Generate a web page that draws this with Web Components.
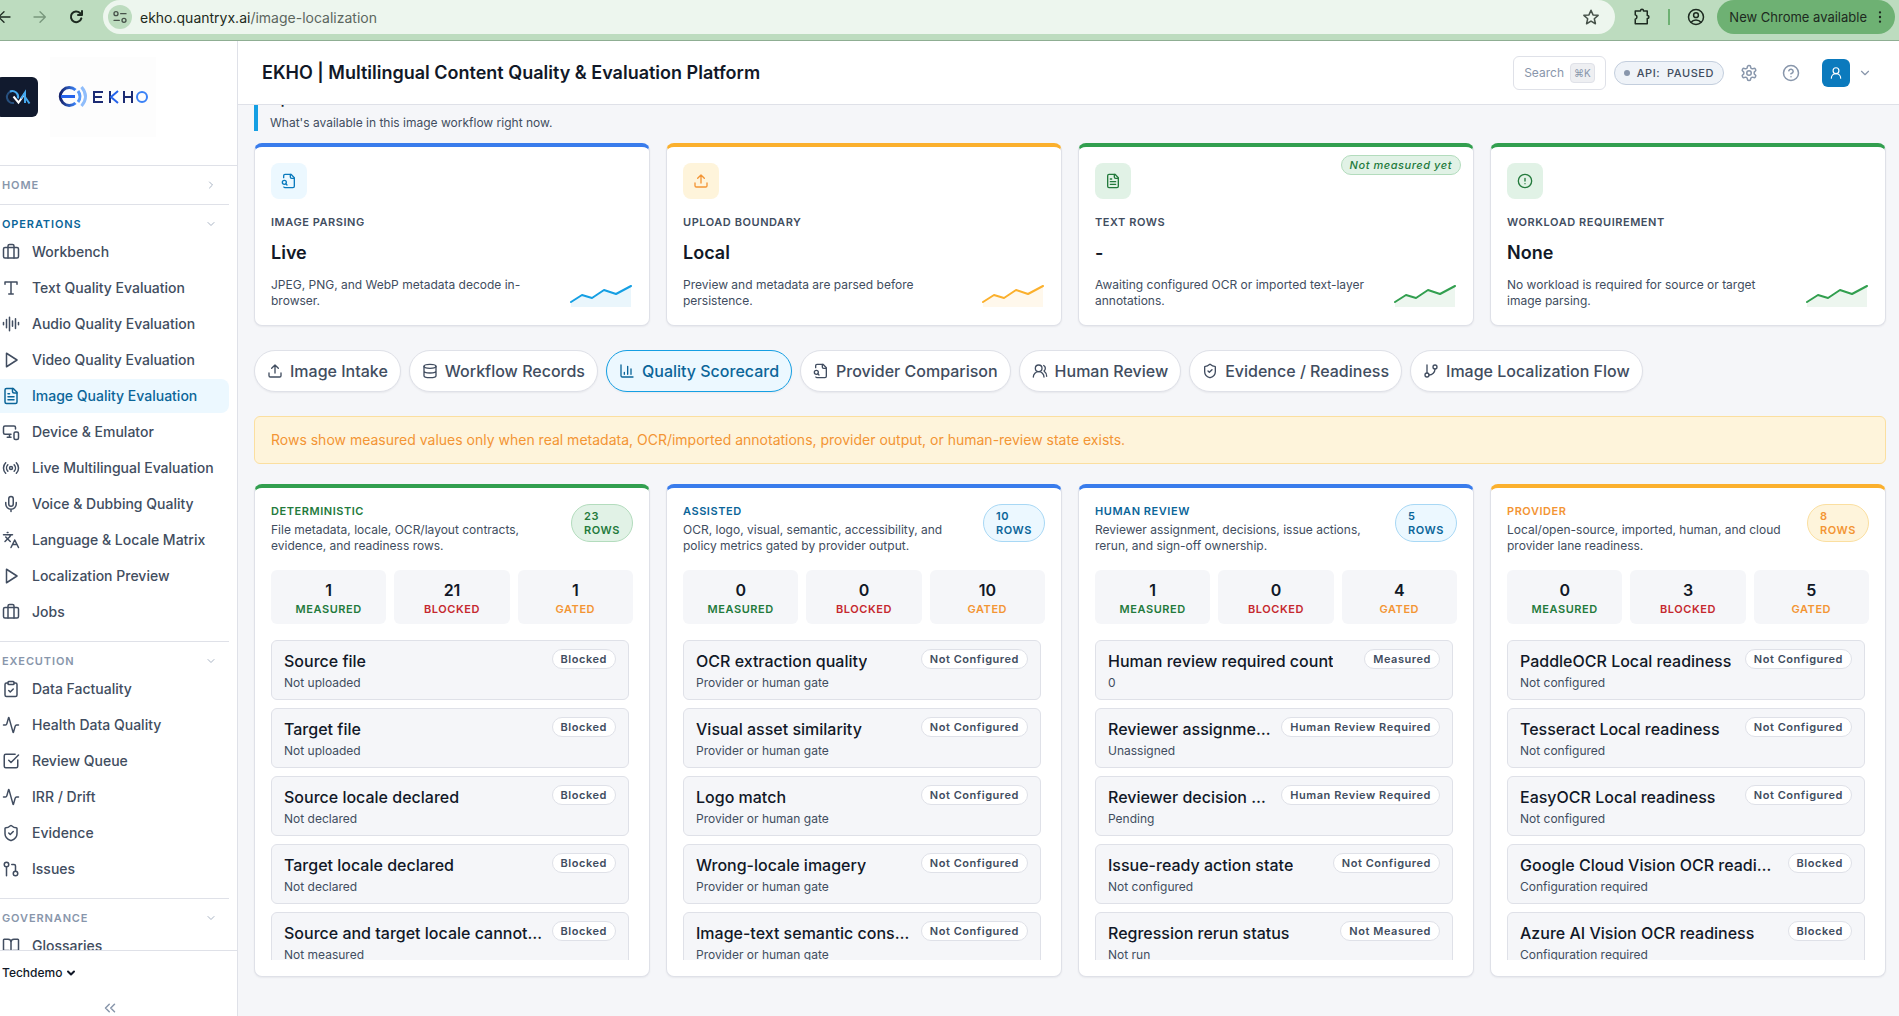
<!DOCTYPE html>
<html lang="en">
<head>
<meta charset="utf-8">
<title>EKHO | Multilingual Content Quality &amp; Evaluation Platform</title>
<style>
    :root {
        --ink: #111827;
        --text: #414d60;
        --muted: #8896ab;
        --line: #dfe1e8;
        --canvas: #f5f6f9;
        --brand: #0b6599;
        --sky: #159fe3;
        --sky-soft: #ecf8ff;
        --blue: #397cec;
        --green: #329f4f;
        --green-dark: #237a3c;
        --green-soft: #e1f2e6;
        --green-line: #b3dcbd;
        --amber: #fbb02d;
        --amber-dark: #f39534;
        --amber-soft: #fef4db;
        --amber-line: #fbdfa0;
        --red: #c5282f;
    }
    body {
        margin: 0;
        background: var(--canvas);
        color: var(--ink);
        font-family: Inter, "Liberation Sans", sans-serif;
    }
</style>
</head>
<body>
<app-shell></app-shell>

<script>
const ICONS = {
    briefcase: '<path d="M16 20V4a2 2 0 0 0-2-2h-4a2 2 0 0 0-2 2v16"/><rect width="20" height="14" x="2" y="6" rx="2"/>',
    type: '<path d="M4 7V4h16v3M9 20h6M12 4v16"/>',
    audio: '<path d="M2 10v3M6 6v11M10 3v18M14 8v7M18 5v13M22 10v3"/>',
    play: '<path d="M6 3l14 9-14 9z"/>',
    file: '<path d="M15 2H6a2 2 0 0 0-2 2v16a2 2 0 0 0 2 2h12a2 2 0 0 0 2-2V7Z"/><path d="M14 2v4a2 2 0 0 0 2 2h4M10 9H8M16 13H8M16 17H8"/>',
    device: '<path d="M18 8V6a2 2 0 0 0-2-2H4a2 2 0 0 0-2 2v7a2 2 0 0 0 2 2h8M10 19v-4M7 19h5"/><rect width="6" height="10" x="16" y="12" rx="2"/>',
    radio: '<path d="M4.9 19.1C1 15.2 1 8.8 4.9 4.9M7.8 16.2c-2.3-2.3-2.3-6.1 0-8.5M16.2 7.8c2.3 2.3 2.3 6.1 0 8.5M19.1 4.9C23 8.8 23 15.1 19.1 19"/><circle cx="12" cy="12" r="2"/>',
    mic: '<path d="M12 2a3 3 0 0 0-3 3v7a3 3 0 0 0 6 0V5a3 3 0 0 0-3-3Z"/><path d="M19 10v2a7 7 0 0 1-14 0v-2M12 19v3"/>',
    languages: '<path d="m5 8 6 6M4 14l6-6 2-3M2 5h12M7 2h1M22 22l-5-10-5 10M14 18h6"/>',
    clipboard: '<rect width="8" height="4" x="8" y="2" rx="1"/><path d="M16 4h2a2 2 0 0 1 2 2v14a2 2 0 0 1-2 2H6a2 2 0 0 1-2-2V6a2 2 0 0 1 2-2h2M9 14l2 2 4-4"/>',
    activity: '<path d="M22 12h-2.48a2 2 0 0 0-1.93 1.46l-2.35 8.36a.25.25 0 0 1-.48 0L9.24 2.18a.25.25 0 0 0-.48 0l-2.35 8.36A2 2 0 0 1 4.49 12H2"/>',
    check: '<path d="M21 10.5V19a2 2 0 0 1-2 2H5a2 2 0 0 1-2-2V5a2 2 0 0 1 2-2h12.5M9 11l3 3L22 4"/>',
    shield: '<path d="M20 13c0 5-3.5 7.5-7.66 8.95a1 1 0 0 1-.67-.01C7.5 20.5 4 18 4 13V6a1 1 0 0 1 1-1c2 0 4.5-1.2 6.24-2.72a1.17 1.17 0 0 1 1.52 0C14.51 3.81 17 5 19 5a1 1 0 0 1 1 1z"/><path d="m9 12 2 2 4-4"/>',
    pull: '<circle cx="18" cy="18" r="3"/><circle cx="6" cy="6" r="3"/><path d="M13 6h3a2 2 0 0 1 2 2v7M6 9v12"/>',
    book: '<path d="M12 7v14M3 18a1 1 0 0 1-1-1V4a1 1 0 0 1 1-1h5a4 4 0 0 1 4 4 4 4 0 0 1 4-4h5a1 1 0 0 1 1 1v13a1 1 0 0 1-1 1h-6a3 3 0 0 0-3 3 3 3 0 0 0-3-3z"/>',
    filesearch: '<path d="M14 2v4a2 2 0 0 0 2 2h4"/><path d="M4.3 21a2 2 0 0 0 1.7 1h12a2 2 0 0 0 2-2V7l-5-5H6a2 2 0 0 0-2 2v3M9 18l-1.5-1.5"/><circle cx="5" cy="14" r="3"/>',
    upload: '<path d="M12 3v12M17 8l-5-5-5 5M21 15v4a2 2 0 0 1-2 2H5a2 2 0 0 1-2-2v-4"/>',
    alert: '<circle cx="12" cy="12" r="10"/><path d="M12 8v4M12 16h.01"/>',
    database: '<ellipse cx="12" cy="5" rx="9" ry="3"/><path d="M3 5v14a9 3 0 0 0 18 0V5M3 12a9 3 0 0 0 18 0"/>',
    chart: '<path d="M3 3v16a2 2 0 0 0 2 2h16M18 17V9M13 17V5M8 17v-3"/>',
    users: '<path d="M18 21a8 8 0 0 0-16 0"/><circle cx="10" cy="8" r="5"/><path d="M22 20c0-3.37-2-6.5-4-8a5 5 0 0 0-.45-8.3"/>',
    branch: '<path d="M6 3v12"/><circle cx="18" cy="6" r="3"/><circle cx="6" cy="18" r="3"/><path d="M18 9a9 9 0 0 1-9 9"/>',
    gear: '<path d="M12.22 2h-.44a2 2 0 0 0-2 2v.18a2 2 0 0 1-1 1.73l-.43.25a2 2 0 0 1-2 0l-.15-.08a2 2 0 0 0-2.73.73l-.22.38a2 2 0 0 0 .73 2.73l.15.1a2 2 0 0 1 1 1.72v.51a2 2 0 0 1-1 1.74l-.15.09a2 2 0 0 0-.73 2.73l.22.38a2 2 0 0 0 2.73.73l.15-.08a2 2 0 0 1 2 0l.43.25a2 2 0 0 1 1 1.73V20a2 2 0 0 0 2 2h.44a2 2 0 0 0 2-2v-.18a2 2 0 0 1 1-1.73l.43-.25a2 2 0 0 1 2 0l.15.08a2 2 0 0 0 2.73-.73l.22-.39a2 2 0 0 0-.73-2.73l-.15-.08a2 2 0 0 1-1-1.74v-.5a2 2 0 0 1 1-1.74l.15-.09a2 2 0 0 0 .73-2.73l-.22-.38a2 2 0 0 0-2.73-.73l-.15.08a2 2 0 0 1-2 0l-.43-.25a2 2 0 0 1-1-1.73V4a2 2 0 0 0-2-2z"/><circle cx="12" cy="12" r="3"/>',
    help: '<circle cx="12" cy="12" r="10"/><path d="M9.09 9a3 3 0 0 1 5.83 1c0 2-3 3-3 3M12 17h.01"/>',
    user: '<circle cx="12" cy="8" r="5"/><path d="M20 21a8 8 0 0 0-16 0"/>',
    down: '<path d="m6 9 6 6 6-6"/>',
    right: '<path d="m9 18 6-6-6-6"/>',
    collapse: '<path d="m11 17-5-5 5-5M18 17l-5-5 5-5"/>',
    back: '<path d="M21 12H4M12 4l-8 8 8 8"/>',
    forward: '<path d="M3 12h17M12 4l8 8-8 8"/>',
    reload: '<path d="M20 14a8 8 0 1 1-2-8l2 2M21 3v6h-6"/>',
    tune: '<circle cx="6" cy="7" r="3"/><path d="M13 7h8M3 17h8"/><circle cx="18" cy="17" r="3"/>',
    star: '<path d="m12 3 2.7 6.2 6.8.6-5.1 4.5 1.5 6.7-5.9-3.5L6.1 21l1.5-6.7L2.5 9.8l6.8-.6z"/>',
    puzzle: '<path d="M3 4h7c0-3 4-3 4 0h5v6c3 0 3 4 0 4v7H3v-6c3-1 3-5 0-6z"/>',
    account: '<circle cx="12" cy="12" r="10"/><circle cx="12" cy="9.5" r="3.2"/><path d="M5.5 19c3-4 10-4 13 0"/>',
    dots: '<path d="M12 4v.01M12 12v.01M12 20v.01"/>'
};

class AppIcon extends HTMLElement {
    connectedCallback() {
        const size = this.getAttribute('size') || 16;
        const weight = this.getAttribute('weight') || 2;
        this.attachShadow({ mode: 'open' }).innerHTML = `
            <style>
                :host { display: inline-flex; flex: none; }
                svg { display: block; }
            </style>
            <svg width="${size}" height="${size}" viewBox="0 0 24 24" fill="none" stroke="currentColor"
                stroke-width="${weight}" stroke-linecap="round" stroke-linejoin="round" aria-hidden="true">${ICONS[this.getAttribute('name')]}</svg>
        `;
    }
}

class BrowserBar extends HTMLElement {
    connectedCallback() {
        this.attachShadow({ mode: 'open' }).innerHTML = `
            <style>
                :host {
                    display: flex;
                    align-items: flex-start;
                    height: 40px;
                    background: #bddcbf;
                    border-bottom: 1px solid #8fae93;
                    color: #1d2a20;
                    font-size: 14px;
                }
                button {
                    display: flex;
                    align-items: center;
                    justify-content: center;
                    border: 0;
                    padding: 0;
                    height: 34px;
                    background: none;
                    color: inherit;
                    font: inherit;
                }
                .nav { display: flex; gap: 20px; margin-right: 19px; }
                .nav button { width: 16px; }
                .nav .first { width: 12px; justify-content: flex-end; }
                .off { color: #78977c; }
                .address {
                    display: flex;
                    flex: 1;
                    align-items: center;
                    height: 34px;
                    box-sizing: border-box;
                    padding: 0 15px 0 5px;
                    border-radius: 17px;
                    background: #edf6ee;
                }
                .address app-icon { color: #47524a; }
                .site { width: 24px; height: 24px; border-radius: 12px; background: #bddcbf; }
                .url { flex: 1; margin-left: 8px; color: #5c665e; }
                .url b { font-weight: 400; color: #1d2a20; }
                .tools { display: flex; align-items: center; height: 34px; gap: 17px; padding: 0 12px 0 18px; }
                .tools i { width: 2px; height: 16px; background: #6eb173; }
                .update { gap: 6px; padding: 0 8px 0 12px; margin-right: 4px; border-radius: 17px; background: #6eb173; font-size: 13px; }
            </style>
            <div class="nav">
                <button class="first" aria-label="Back"><app-icon name="back" size="16"></app-icon></button>
                <button class="off" aria-label="Forward"><app-icon name="forward" size="16"></app-icon></button>
                <button aria-label="Reload"><app-icon name="reload" size="16" weight="3"></app-icon></button>
            </div>
            <div class="address">
                <button class="site" aria-label="Site information"><app-icon name="tune" size="16"></app-icon></button>
                <span class="url"><b>ekho.quantryx.ai</b>/image-localization</span>
                <button aria-label="Bookmark"><app-icon name="star" size="18"></app-icon></button>
            </div>
            <div class="tools">
                <button aria-label="Extensions"><app-icon name="puzzle" size="18"></app-icon></button>
                <i></i>
                <button aria-label="Profile"><app-icon name="account" size="18"></app-icon></button>
            </div>
            <button class="update">New Chrome available <app-icon name="dots" size="14" weight="4"></app-icon></button>
        `;
    }
}

class NavSection extends HTMLElement {
    connectedCallback() {
        const open = this.hasAttribute('open');
        this.attachShadow({ mode: 'open' }).innerHTML = `
            <style>
                :host { display: block; padding: 8px 0; border-bottom: 1px solid var(--line); }
                button {
                    display: flex;
                    align-items: center;
                    justify-content: space-between;
                    width: 100%;
                    height: 22px;
                    border: 0;
                    padding: 0 12px 0 2px;
                    background: none;
                    color: var(--muted);
                    font: 600 11px/16px Inter, sans-serif;
                    letter-spacing: 0.08em;
                }
                :host([current]) button { color: var(--brand); }
                app-icon { color: #a9b4c4; }
                .items { display: flex; flex-direction: column; gap: 2px; padding-bottom: ${open ? 4 : 0}px; }
            </style>
            <button aria-expanded="${open}">${this.getAttribute('label')}<app-icon name="${open ? 'down' : 'right'}" size="12"></app-icon></button>
            <div class="items"><slot></slot></div>
        `;
    }
}

class NavItem extends HTMLElement {
    connectedCallback() {
        this.attachShadow({ mode: 'open' }).innerHTML = `
            <style>
                :host { display: block; }
                a {
                    display: flex;
                    align-items: center;
                    gap: 12px;
                    height: 34px;
                    padding-left: 2px;
                    border-radius: 0 8px 8px 0;
                    color: var(--text);
                    font-size: 14px;
                    line-height: 20px;
                    font-weight: 500;
                    text-decoration: none;
                    white-space: nowrap;
                }
                :host([active]) a { background: var(--sky-soft); color: var(--brand); }
            </style>
            <a href="#"><app-icon name="${this.getAttribute('icon')}" size="18"></app-icon><slot></slot></a>
        `;
    }
}

class SideNav extends HTMLElement {
    connectedCallback() {
        this.attachShadow({ mode: 'open' }).innerHTML = `
            <style>
                :host {
                    display: flex;
                    flex-direction: column;
                    width: 237px;
                    flex: none;
                    border-right: 1px solid var(--line);
                    background: #fff;
                }
                .brand {
                    display: flex;
                    align-items: center;
                    gap: 12px;
                    padding: 16px 0 28px;
                    border-bottom: 1px solid var(--line);
                }
                .brand svg { display: block; }
                nav { flex: 1; min-height: 0; overflow: auto; scrollbar-width: none; padding-right: 8px; }
                .foot { border-top: 1px solid var(--line); height: 65px; }
                .org { display: flex; align-items: center; gap: 2px; height: 44px; }
                select {
                    appearance: none;
                    border: 0;
                    padding: 0 0 0 2px;
                    background: none;
                    color: var(--ink);
                    font: 500 12px/16px Inter, sans-serif;
                }
                .fold { display: flex; justify-content: center; width: 220px; border: 0; padding: 4px 0 0; background: none; color: var(--muted); }
            </style>
            <div class="brand">
                <svg width="38" height="40" viewBox="0 0 38 40" role="img" aria-label="Quantryx">
                    <rect x="-4" width="42" height="40" rx="6" fill="#111a2e"/>
                    <path d="M14 26a6 6 0 1 1-2-12" fill="none" stroke="#27507f" stroke-width="2"/>
                    <path d="M10 14.5a6 6 0 0 1 8 7" fill="none" stroke="#45a8ee" stroke-width="2"/>
                    <path d="M13.5 19.5l5 6 6.5-9" fill="none" stroke="#fff" stroke-width="2"/>
                    <path d="M21 21.5l4-6V26M25 20l4.5 6.5" fill="none" stroke="#45a8ee" stroke-width="2"/>
                </svg>
                <svg width="106" height="80" viewBox="0 0 106 80" role="img" aria-label="EKHO">
                    <defs>
                        <linearGradient id="e"><stop stop-color="#16236b"/><stop offset="1" stop-color="#3b82f6"/></linearGradient>
                    </defs>
                    <rect width="106" height="80" fill="#fdfdfd"/>
                    <path d="M25.5 33A9 9 0 1 0 25.5 46" fill="none" stroke="url(#e)" stroke-width="3"/>
                    <path d="M11 38h14v3H11z" fill="#2563eb"/>
                    <path d="M28 34q4 5.5 0 11" fill="none" stroke="#5b9bf8" stroke-width="3"/>
                    <path d="M31.5 30q8 9.5 0 19" fill="none" stroke="#8fbdfb" stroke-width="3"/>
                    <path d="M53 35h-9v10h9M44 40h8M60 34v12M74 34v12M82 34v12M74 40h8" fill="none" stroke="#1c2c74" stroke-width="2"/>
                    <path d="M68 34l-7 6 7 6" fill="none" stroke="#2563eb" stroke-width="2"/>
                    <circle cx="92" cy="40" r="5" fill="none" stroke="#3b82f6" stroke-width="2"/>
                </svg>
            </div>
            <nav>
                <nav-section label="HOME"></nav-section>
                <nav-section label="OPERATIONS" open current>
                    <nav-item icon="briefcase">Workbench</nav-item>
                    <nav-item icon="type">Text Quality Evaluation</nav-item>
                    <nav-item icon="audio">Audio Quality Evaluation</nav-item>
                    <nav-item icon="play">Video Quality Evaluation</nav-item>
                    <nav-item icon="file" active>Image Quality Evaluation</nav-item>
                    <nav-item icon="device">Device &amp; Emulator</nav-item>
                    <nav-item icon="radio">Live Multilingual Evaluation</nav-item>
                    <nav-item icon="mic">Voice &amp; Dubbing Quality</nav-item>
                    <nav-item icon="languages">Language &amp; Locale Matrix</nav-item>
                    <nav-item icon="play">Localization Preview</nav-item>
                    <nav-item icon="briefcase">Jobs</nav-item>
                </nav-section>
                <nav-section label="EXECUTION" open>
                    <nav-item icon="clipboard">Data Factuality</nav-item>
                    <nav-item icon="activity">Health Data Quality</nav-item>
                    <nav-item icon="check">Review Queue</nav-item>
                    <nav-item icon="activity">IRR / Drift</nav-item>
                    <nav-item icon="shield">Evidence</nav-item>
                    <nav-item icon="pull">Issues</nav-item>
                </nav-section>
                <nav-section label="GOVERNANCE" open>
                    <nav-item icon="book">Glossaries</nav-item>
                </nav-section>
            </nav>
            <div class="foot">
                <label class="org">
                    <select aria-label="Workspace"><option>Techdemo</option></select>
                    <app-icon name="down" size="12" weight="4"></app-icon>
                </label>
                <button class="fold" aria-label="Collapse sidebar"><app-icon name="collapse" size="18"></app-icon></button>
            </div>
        `;
    }
}

class TopBar extends HTMLElement {
    connectedCallback() {
        this.attachShadow({ mode: 'open' }).innerHTML = `
            <style>
                :host {
                    display: flex;
                    align-items: center;
                    flex: none;
                    height: 63px;
                    padding: 0 27px 0 24px;
                    border-bottom: 1px solid var(--line);
                    background: #fff;
                    color: var(--muted);
                }
                h1 { flex: 1; margin: 0; color: var(--ink); font-size: 18px; font-weight: 600; }
                button { display: flex; align-items: center; border: 0; padding: 0; background: none; color: inherit; font: inherit; }
                .search {
                    gap: 6px;
                    height: 34px;
                    margin-right: 8px;
                    padding: 0 10px;
                    border: 1px solid var(--line);
                    border-radius: 6px;
                    font-size: 12px;
                }
                kbd {
                    padding: 1px 3px;
                    border: 1px solid var(--line);
                    border-radius: 4px;
                    background: #eeeff2;
                    font: 10px/16px Inter, "DejaVu Sans", sans-serif;
                }
                .api {
                    display: flex;
                    align-items: center;
                    gap: 7px;
                    height: 22px;
                    padding: 0 9px;
                    border: 1px solid #c3cedd;
                    border-radius: 12px;
                    background: #eff3f8;
                    color: var(--text);
                    font-size: 11px;
                    font-weight: 500;
                    letter-spacing: 0.05em;
                    white-space: pre;
                }
                .api i { width: 6px; height: 6px; border-radius: 3px; background: var(--muted); }
                .tools { display: flex; align-items: center; gap: 24px; margin: 0 22px 0 16px; }
                .avatar { justify-content: center; width: 28px; height: 28px; margin-right: 8px; border-radius: 6px; background: #0b7abd; color: #fff; }
            </style>
            <h1>EKHO | Multilingual Content Quality &amp; Evaluation Platform</h1>
            <button class="search">Search <kbd>⌘K</kbd></button>
            <span class="api"><i></i>API:  PAUSED</span>
            <div class="tools">
                <button aria-label="Settings"><app-icon name="gear" size="18"></app-icon></button>
                <button aria-label="Help"><app-icon name="help" size="18"></app-icon></button>
            </div>
            <button class="avatar" aria-label="Account"><app-icon name="user" size="14"></app-icon></button>
            <button aria-label="Account menu"><app-icon name="down" size="14"></app-icon></button>
        `;
    }
}

class MetricCard extends HTMLElement {
    connectedCallback() {
        const get = name => this.getAttribute(name);
        this.attachShadow({ mode: 'open' }).innerHTML = `
            <style>
                :host {
                    display: block;
                    position: relative;
                    padding: 16px;
                    border: 1px solid var(--line);
                    border-top: 4px solid var(--edge);
                    border-radius: 8px;
                    background: #fff;
                    box-shadow: 0 1px 2px rgba(17, 24, 39, .06);
                    --edge: var(--green);
                    --spark: var(--green);
                    --tone: var(--green-dark);
                    --soft: var(--green-soft);
                }
                :host([tone=blue]) { --edge: var(--blue); --spark: var(--sky); --tone: #0b7abd; --soft: var(--sky-soft); }
                :host([tone=amber]) { --edge: var(--amber); --spark: var(--amber); --tone: var(--amber-dark); --soft: var(--amber-soft); }
                .icon {
                    display: flex;
                    align-items: center;
                    justify-content: center;
                    width: 36px;
                    height: 36px;
                    border-radius: 8px;
                    background: var(--soft);
                    color: var(--tone);
                }
                h3 { margin: 15px 0 0; color: var(--text); font-size: 11px; line-height: 16px; font-weight: 600; letter-spacing: 0.05em; }
                strong { display: block; margin-top: 11px; font-size: 18px; line-height: 24px; font-weight: 600; }
                .row { display: flex; align-items: flex-end; justify-content: space-between; gap: 16px; margin-top: 12px; }
                p { max-width: 280px; margin: 0; color: var(--text); font-size: 12px; line-height: 16px; }
                .spark { flex: none; display: block; color: var(--spark); }
                .badge {
                    position: absolute;
                    top: 8px;
                    right: 12px;
                    padding: 1px 8px;
                    border: 1px solid var(--green-line);
                    border-radius: 10px;
                    background: var(--green-soft);
                    color: var(--green-dark);
                    font-size: 11px;
                    line-height: 16px;
                    font-weight: 500;
                    font-style: italic;
                    letter-spacing: 0.05em;
                }
            </style>
            <div class="icon"><app-icon name="${get('icon')}" size="16"></app-icon></div>
            ${get('badge') ? `<span class="badge">${get('badge')}</span>` : ''}
            <h3>${get('label')}</h3>
            <strong>${get('value')}</strong>
            <div class="row">
                <p><slot></slot></p>
                <svg class="spark" width="64" height="24" viewBox="0 0 64 24" aria-hidden="true">
                    <path d="M2 17l11-7 10 3 12-8 12 4 15-8v21H2z" fill="currentColor" opacity=".09"/>
                    <path d="M2 17l11-7 10 3 12-8 12 4 15-8" fill="none" stroke="currentColor" stroke-width="2" stroke-linecap="round" stroke-linejoin="round"/>
                </svg>
            </div>
        `;
    }
}

class TabPill extends HTMLElement {
    connectedCallback() {
        this.attachShadow({ mode: 'open' }).innerHTML = `
            <style>
                :host { display: block; }
                button {
                    display: flex;
                    align-items: center;
                    gap: 7px;
                    height: 42px;
                    padding: 0 12px;
                    border: 1px solid var(--line);
                    border-radius: 21px;
                    background: #fff;
                    box-shadow: 0 1px 2px rgba(17, 24, 39, .06);
                    color: var(--text);
                    font: 500 16px/24px Inter, sans-serif;
                    white-space: nowrap;
                }
                :host([active]) button { border-color: var(--sky); background: var(--sky-soft); color: var(--brand); }
            </style>
            <button role="tab" aria-selected="${this.hasAttribute('active')}"><app-icon name="${this.getAttribute('icon')}" size="16"></app-icon><slot></slot></button>
        `;
    }
}

class ScoreRow extends HTMLElement {
    connectedCallback() {
        this.attachShadow({ mode: 'open' }).innerHTML = `
            <style>
                :host {
                    display: block;
                    flex: none;
                    box-sizing: border-box;
                    height: 60px;
                    padding: 8px 12px;
                    border: 1px solid var(--line);
                    border-radius: 6px;
                    background: var(--canvas);
                }
                .top { display: flex; align-items: flex-start; justify-content: space-between; gap: 8px; }
                h4 {
                    min-width: 0;
                    margin: 0;
                    overflow: hidden;
                    font-size: 16px;
                    line-height: 24px;
                    font-weight: 550;
                    text-overflow: ellipsis;
                    white-space: nowrap;
                }
                .chip {
                    flex: none;
                    padding: 1px 8px;
                    border: 1px solid var(--line);
                    border-radius: 10px;
                    background: #fff;
                    color: var(--text);
                    font-size: 11px;
                    line-height: 16px;
                    font-weight: 600;
                    letter-spacing: 0.05em;
                }
                p { margin: 2px 0 0; color: var(--text); font-size: 12px; line-height: 16px; }
            </style>
            <div class="top"><h4>${this.getAttribute('label')}</h4><span class="chip">${this.getAttribute('state')}</span></div>
            <p><slot></slot></p>
        `;
    }
}

class ScoreCard extends HTMLElement {
    set data({ label, text, rows, counts, items }) {
        this.attachShadow({ mode: 'open' }).innerHTML = `
            <style>
                :host {
                    display: block;
                    min-width: 0;
                    padding: 16px;
                    border: 1px solid var(--line);
                    border-top: 4px solid var(--edge);
                    border-radius: 8px;
                    background: #fff;
                    box-shadow: 0 1px 2px rgba(17, 24, 39, .06);
                    --edge: var(--green);
                    --tone: var(--green-dark);
                    --soft: var(--green-soft);
                    --rim: var(--green-line);
                }
                :host([tone=blue]) { --edge: var(--blue); --tone: var(--brand); --soft: var(--sky-soft); --rim: #a8d8f5; }
                :host([tone=amber]) { --edge: var(--amber); --tone: var(--amber-dark); --soft: var(--amber-soft); --rim: var(--amber-line); }
                header { display: flex; align-items: flex-start; justify-content: space-between; min-height: 50px; }
                h3 { margin: 0; color: var(--tone); font-size: 11px; line-height: 14px; font-weight: 600; letter-spacing: 0.05em; }
                header p { max-width: 280px; margin: 4px 0 0; color: var(--text); font-size: 12px; line-height: 16px; }
                .rows {
                    width: min-content;
                    padding: 4px 12px;
                    border: 1px solid var(--rim);
                    border-radius: 19px;
                    background: var(--soft);
                    color: var(--tone);
                    font-size: 11px;
                    line-height: 14px;
                    font-weight: 600;
                    letter-spacing: 0.05em;
                }
                .counts { display: grid; grid-template-columns: repeat(3, 1fr); gap: 8px; margin: 16px 0; }
                .counts div { display: flex; flex-direction: column; align-items: center; padding: 9px 0 7px; border-radius: 6px; background: var(--canvas); }
                .counts b { font-size: 16px; line-height: 22px; font-weight: 600; }
                .counts span { color: var(--green-dark); font-size: 11px; line-height: 16px; font-weight: 600; letter-spacing: 0.05em; }
                .counts .blocked { color: var(--red); }
                .counts .gated { color: var(--amber-dark); }
                .list { display: flex; flex-direction: column; gap: 8px; height: 320px; padding-right: 4px; overflow: auto; scrollbar-width: none; }
            </style>
            <header>
                <div><h3>${label}</h3><p>${text}</p></div>
                <span class="rows">${rows} ROWS</span>
            </header>
            <div class="counts">
                <div><b>${counts[0]}</b><span>MEASURED</span></div>
                <div><b>${counts[1]}</b><span class="blocked">BLOCKED</span></div>
                <div><b>${counts[2]}</b><span class="gated">GATED</span></div>
            </div>
            <div class="list">
                ${items.map(([name, value, state]) => `<score-row label="${name}" state="${state}">${value}</score-row>`).join('')}
            </div>
        `;
    }
}

const SCORES = [
    {
        tone: 'green', label: 'DETERMINISTIC', rows: 23, counts: [1, 21, 1],
        text: 'File metadata, locale, OCR/layout contracts, evidence, and readiness rows.',
        items: [
            ['Source file', 'Not uploaded', 'Blocked'],
            ['Target file', 'Not uploaded', 'Blocked'],
            ['Source locale declared', 'Not declared', 'Blocked'],
            ['Target locale declared', 'Not declared', 'Blocked'],
            ['Source and target locale cannot match', 'Not measured', 'Blocked']
        ]
    },
    {
        tone: 'blue', label: 'ASSISTED', rows: 10, counts: [0, 0, 10],
        text: 'OCR, logo, visual, semantic, accessibility, and policy metrics gated by provider output.',
        items: [
            ['OCR extraction quality', 'Provider or human gate', 'Not Configured'],
            ['Visual asset similarity', 'Provider or human gate', 'Not Configured'],
            ['Logo match', 'Provider or human gate', 'Not Configured'],
            ['Wrong-locale imagery', 'Provider or human gate', 'Not Configured'],
            ['Image-text semantic consistency', 'Provider or human gate', 'Not Configured']
        ]
    },
    {
        tone: 'blue', label: 'HUMAN REVIEW', rows: 5, counts: [1, 0, 4],
        text: 'Reviewer assignment, decisions, issue actions, rerun, and sign-off ownership.',
        items: [
            ['Human review required count', '0', 'Measured'],
            ['Reviewer assignment state', 'Unassigned', 'Human Review Required'],
            ['Reviewer decision state', 'Pending', 'Human Review Required'],
            ['Issue-ready action state', 'Not configured', 'Not Configured'],
            ['Regression rerun status', 'Not run', 'Not Measured']
        ]
    },
    {
        tone: 'amber', label: 'PROVIDER', rows: 8, counts: [0, 3, 5],
        text: 'Local/open-source, imported, human, and cloud provider lane readiness.',
        items: [
            ['PaddleOCR Local readiness', 'Not configured', 'Not Configured'],
            ['Tesseract Local readiness', 'Not configured', 'Not Configured'],
            ['EasyOCR Local readiness', 'Not configured', 'Not Configured'],
            ['Google Cloud Vision OCR readiness', 'Configuration required', 'Blocked'],
            ['Azure AI Vision OCR readiness', 'Configuration required', 'Blocked']
        ]
    }
];

class ImageWorkflow extends HTMLElement {
    connectedCallback() {
        const shadow = this.attachShadow({ mode: 'open' });
        shadow.innerHTML = `
            <style>
                :host { display: block; flex: 1; min-height: 0; overflow: hidden; padding: 0 13px 0 16px; }
                /* the section title is scrolled under the top bar */
                .intro { margin-top: -18px; padding-left: 12px; border-left: 4px solid var(--sky); }
                h2 { margin: 0 0 4px; font-size: 14px; line-height: 24px; font-weight: 600; }
                .intro p { margin: 0; color: var(--text); font-size: 12px; line-height: 16px; }
                .grid { display: grid; grid-template-columns: repeat(4, minmax(0, 1fr)); gap: 16px; }
                .metrics { margin-top: 12px; }
                .tabs { display: flex; gap: 8px; margin: 24px 0; }
                .note {
                    margin: 0 0 20px;
                    padding: 12px 16px;
                    border: 1px solid var(--amber-line);
                    border-radius: 6px;
                    background: var(--amber-soft);
                    color: var(--amber-dark);
                    font-size: 14px;
                    line-height: 22px;
                }
            </style>
            <div class="intro">
                <h2>Operational state</h2>
                <p>What's available in this image workflow right now.</p>
            </div>
            <div class="grid metrics">
                <metric-card tone="blue" icon="filesearch" label="IMAGE PARSING" value="Live">JPEG, PNG, and WebP metadata decode in-browser.</metric-card>
                <metric-card tone="amber" icon="upload" label="UPLOAD BOUNDARY" value="Local">Preview and metadata are parsed before persistence.</metric-card>
                <metric-card icon="file" label="TEXT ROWS" value="-" badge="Not measured yet">Awaiting configured OCR or imported text-layer annotations.</metric-card>
                <metric-card icon="alert" label="WORKLOAD REQUIREMENT" value="None">No workload is required for source or target image parsing.</metric-card>
            </div>
            <div class="tabs" role="tablist">
                <tab-pill icon="upload">Image Intake</tab-pill>
                <tab-pill icon="database">Workflow Records</tab-pill>
                <tab-pill icon="chart" active>Quality Scorecard</tab-pill>
                <tab-pill icon="filesearch">Provider Comparison</tab-pill>
                <tab-pill icon="users">Human Review</tab-pill>
                <tab-pill icon="shield">Evidence / Readiness</tab-pill>
                <tab-pill icon="branch">Image Localization Flow</tab-pill>
            </div>
            <p class="note">Rows show measured values only when real metadata, OCR/imported annotations, provider output, or human-review state exists.</p>
            <div class="grid scores"></div>
        `;
        const grid = shadow.querySelector('.scores');
        SCORES.forEach(score => {
            const card = document.createElement('score-card');
            card.setAttribute('tone', score.tone);
            card.data = score;
            grid.appendChild(card);
        });
    }
}

class AppShell extends HTMLElement {
    connectedCallback() {
        this.attachShadow({ mode: 'open' }).innerHTML = `
            <style>
                :host { display: flex; flex-direction: column; height: 100vh; overflow: hidden; }
                browser-bar { flex: none; }
                .body { display: flex; flex: 1; min-height: 0; }
                main { display: flex; flex: 1; flex-direction: column; min-width: 0; }
            </style>
            <browser-bar></browser-bar>
            <div class="body">
                <side-nav></side-nav>
                <main>
                    <top-bar></top-bar>
                    <image-workflow></image-workflow>
                </main>
            </div>
        `;
    }
}

customElements.define('app-icon', AppIcon);
customElements.define('browser-bar', BrowserBar);
customElements.define('nav-section', NavSection);
customElements.define('nav-item', NavItem);
customElements.define('side-nav', SideNav);
customElements.define('top-bar', TopBar);
customElements.define('metric-card', MetricCard);
customElements.define('tab-pill', TabPill);
customElements.define('score-row', ScoreRow);
customElements.define('score-card', ScoreCard);
customElements.define('image-workflow', ImageWorkflow);
customElements.define('app-shell', AppShell);
</script>
</body>
</html>
